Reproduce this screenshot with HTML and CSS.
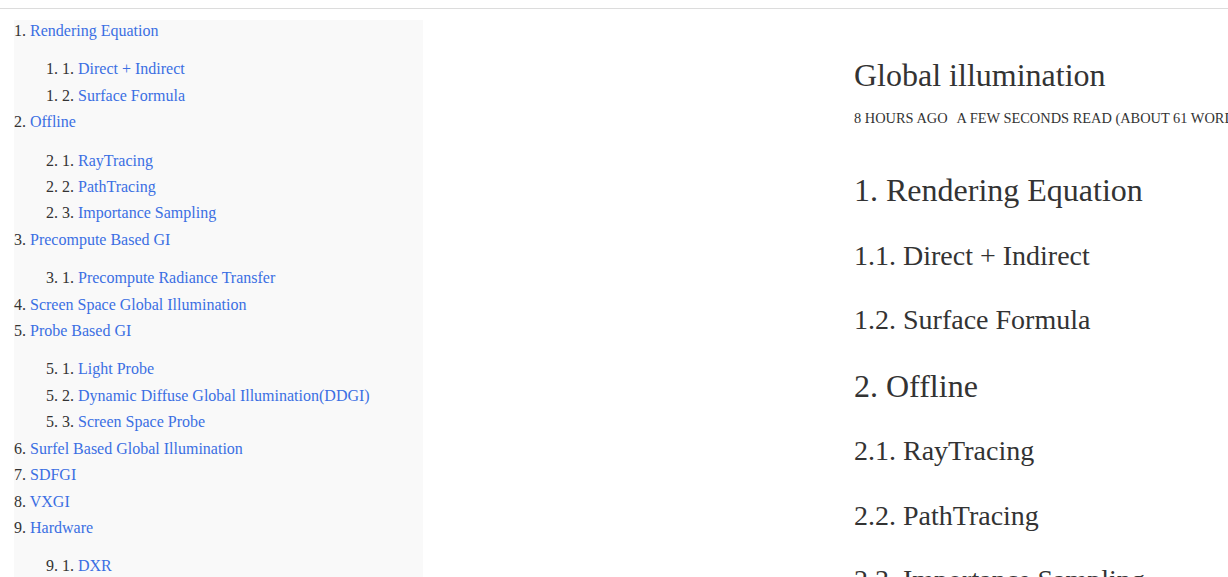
FILE: index.html
```html
<!DOCTYPE html>
<html lang="en">
<head>
<meta charset="utf-8">
<title>Global illumination</title>
<link rel="stylesheet" href="styles.css">
</head>
<body>
<div class="topline"></div>
<div class="page">
  <nav class="toc">
    <ol class="toc-list">
      <li><span class="num">1.</span> <a href="#">Rendering Equation</a>
        <ol class="toc-sub">
          <li><span class="num">1. 1.</span> <a href="#">Direct + Indirect</a></li>
          <li><span class="num">1. 2.</span> <a href="#">Surface Formula</a></li>
        </ol>
      </li>
      <li><span class="num">2.</span> <a href="#">Offline</a>
        <ol class="toc-sub">
          <li><span class="num">2. 1.</span> <a href="#">RayTracing</a></li>
          <li><span class="num">2. 2.</span> <a href="#">PathTracing</a></li>
          <li><span class="num">2. 3.</span> <a href="#">Importance Sampling</a></li>
        </ol>
      </li>
      <li><span class="num">3.</span> <a href="#">Precompute Based GI</a>
        <ol class="toc-sub">
          <li><span class="num">3. 1.</span> <a href="#">Precompute Radiance Transfer</a></li>
        </ol>
      </li>
      <li><span class="num">4.</span> <a href="#">Screen Space Global Illumination</a></li>
      <li><span class="num">5.</span> <a href="#">Probe Based GI</a>
        <ol class="toc-sub">
          <li><span class="num">5. 1.</span> <a href="#">Light Probe</a></li>
          <li><span class="num">5. 2.</span> <a href="#">Dynamic Diffuse Global Illumination(DDGI)</a></li>
          <li><span class="num">5. 3.</span> <a href="#">Screen Space Probe</a></li>
        </ol>
      </li>
      <li><span class="num">6.</span> <a href="#">Surfel Based Global Illumination</a></li>
      <li><span class="num">7.</span> <a href="#">SDFGI</a></li>
      <li><span class="num">8.</span> <a href="#">VXGI</a></li>
      <li><span class="num">9.</span> <a href="#">Hardware</a>
        <ol class="toc-sub">
          <li><span class="num">9. 1.</span> <a href="#">DXR</a></li>
        </ol>
      </li>
    </ol>
  </nav>
  <main class="post">
    <h1 class="post-title">Global illumination</h1>
    <div class="post-meta"><span>8 hours ago</span><span>A few seconds read (About 61 words)</span></div>
    <div class="post-body">
      <h1 class="sec">1. Rendering Equation</h1>
      <h2 class="sub">1.1. Direct + Indirect</h2>
      <h2 class="sub">1.2. Surface Formula</h2>
      <h1 class="sec">2. Offline</h1>
      <h2 class="sub">2.1. RayTracing</h2>
      <h2 class="sub">2.2. PathTracing</h2>
      <h2 class="sub">2.3. Importance Sampling</h2>
    </div>
  </main>
</div>
</body>
</html>
```

FILE: styles.css
```css
html, body {
  margin: 0;
  padding: 0;
  overflow: hidden;
  background: #fff;
}
body {
  font-family: "Liberation Serif", "Times New Roman", serif;
  color: #333;
}
.topline {
  margin-top: 8px;
  height: 1px;
  background: #dcdcdc;
}
.page {
  display: grid;
  grid-template-columns: 409px 1fr;
  column-gap: 431px;
  padding: 11px 0 0 14px;
}
.toc {
  background: #f9f9f9;
  min-height: 600px;
  font-size: 16px;
}
.toc ol {
  list-style: none;
  margin: 0;
  padding: 0;
}
.toc li {
  line-height: 22.4px;
  margin-bottom: 4px;
  white-space: nowrap;
}
.toc .toc-sub {
  margin-top: 16px;
  padding-left: 32px;
}
.toc .num {
  color: #333;
}
.toc a {
  color: #3b6fe3;
  text-decoration: none;
}
.post {
  padding-top: 36px;
  white-space: nowrap;
  min-width: 0;
}
.post-title {
  font-size: 32px;
  line-height: 38.4px;
  font-weight: normal;
  margin: 0;
  color: #333;
}
.post-meta {
  margin-top: 16px;
  font-size: 14.4px;
  line-height: 16px;
  text-transform: uppercase;
  display: flex;
  gap: 9px;
}
.post-body {
  margin-top: 45px;
}
.post-body .sec,
.post-body .sub {
  font-weight: normal;
  margin: 0 0 30.5px 0;
  color: #333;
}
.post-body .sec {
  font-size: 32px;
  line-height: 38.4px;
  margin-bottom: 29px;
}
.post-body .sub {
  font-size: 28px;
  line-height: 33.6px;
}
```
